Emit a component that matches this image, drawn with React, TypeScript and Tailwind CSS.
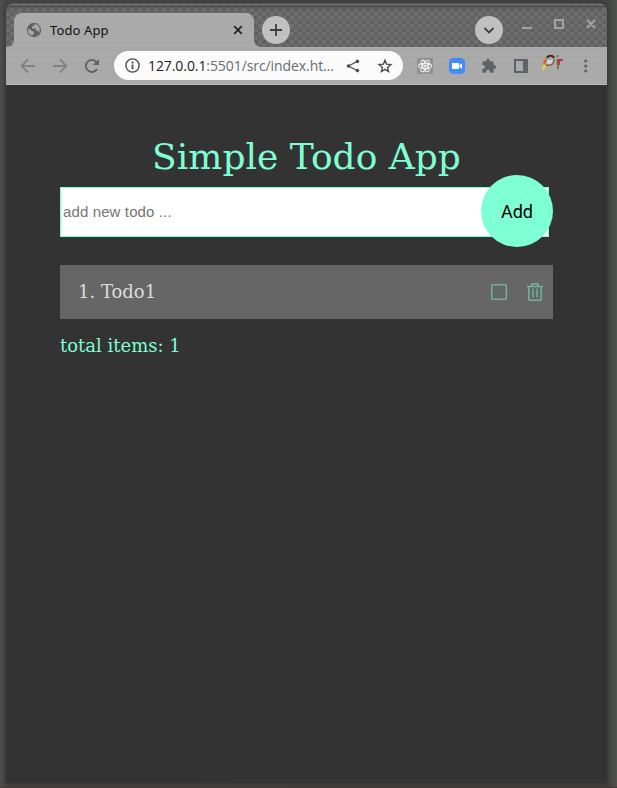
import React from "react";

const weave =
  "bg-[conic-gradient(#626262_25%,#6f6f6f_0_50%,#616161_0_75%,#6c6c6c_0)] bg-[length:8px_8px]";
const brushed =
  "bg-[repeating-linear-gradient(180deg,#a9a9a9_0px,#adadad_1px,#a6a6a6_2px,#ababab_3px,#a7a7a7_5px,#afafaf_6px,#a8a8a8_7px,#adadad_9px,#a6a6a6_10px,#ababab_12px,#a9a9a9_13px)]";

function TabStrip() {
  return (
    <div className={`flex h-11 shrink-0 items-start border-t border-[#555] ${weave}`}>
      <div className="-mt-px flex h-11 w-full items-end bg-[linear-gradient(180deg,#66666688_0px,#66666688_3px,#464646_3px,#464646_4px,#55555588_4px,#55555500_8px)]">
        <svg width="8" height="8" viewBox="0 0 8 8" className="shrink-0">
          <path d="M8 0C8 5 5 8 0 8H8Z" fill="#a8a8a8" />
        </svg>
        <div className={`flex h-[34px] w-[240px] shrink-0 items-center rounded-t-lg pl-3 pr-2.5 ${brushed}`}>
          <svg width="16" height="16" viewBox="0 0 16 16" className="shrink-0">
            <circle cx="8" cy="8" r="7.2" fill="#5f6368" />
            <path d="M2 6.6 6 8.7 7.8 10v1.8l-2 1.8C3.2 12.7 1.5 10.4 2 6.6ZM8.8 2C8.4 3.8 8 4.5 6 4.3v2.2h3.8v2.1h2l.6 2.2C15.5 7.1 13.2 2.6 8.8 2Z" fill="#a8a8a8" />
          </svg>
          <span className="ml-2 mt-px flex-1 whitespace-nowrap font-['Noto_Sans',sans-serif] text-[13px] tracking-[0.12px] text-[#111]">Todo App</span>
          <svg width="12" height="12" viewBox="0 0 12 12" className="shrink-0">
            <path d="M2.2 2.2 9.8 9.8M9.8 2.2 2.2 9.8" stroke="#202124" strokeWidth="1.7" />
          </svg>
        </div>
        <svg width="8" height="8" viewBox="0 0 8 8" className="shrink-0">
          <path d="M0 0C0 5 3 8 8 8H0Z" fill="#a8a8a8" />
        </svg>
        <div className="mb-[3px] flex size-7 shrink-0 items-center justify-center rounded-full bg-[#c0c0c0]">
          <svg width="14" height="14" viewBox="0 0 14 14"><path d="M7 1v12M1 7h12" stroke="#3c4043" strokeWidth="1.8" /></svg>
        </div>
        <div className="mb-[3px] ml-[185px] flex size-7 shrink-0 items-center justify-center rounded-full bg-[#c0c0c0]">
          <svg width="12" height="12" viewBox="0 0 12 12"><path d="m1.5 4 4.5 4.5L10.5 4" fill="none" stroke="#3c4043" strokeWidth="1.8" /></svg>
        </div>
        <svg width="80" height="14" viewBox="0 0 80 14" className="mb-4 ml-[17px] shrink-0" fill="none" stroke="#a2a2a2" strokeWidth="2">
          <path d="M2 11h10M35 3h8v8h-8zM67 3l8 8M75 3l-8 8" />
        </svg>
      </div>
    </div>
  );
}

function Toolbar() {
  return (
    <div className={`flex h-[38px] shrink-0 items-center border-b border-[#bcbcbc] pl-3 ${brushed}`}>
      <svg width="84" height="20" viewBox="0 0 84 20" className="shrink-0" fill="none" strokeWidth="1.9">
        <path d="M17 10H4M10 3.5 3.5 10l6.5 6.5M35 10h13M42 3.5l6.5 6.5-6.5 6.5" stroke="#818386" />
        <path d="M79 13a6 6 0 1 1-.7-7.1L80 7.6" stroke="#5f6368" />
        <path d="M81 3v6h-6z" fill="#5f6368" />
      </svg>
      <div className="ml-3 flex h-[29px] w-[289px] shrink-0 items-center rounded-full bg-[#fbfbfb] pl-[11px] pr-2.5">
        <svg width="15" height="15" viewBox="0 0 15 15" className="shrink-0">
          <circle cx="7.5" cy="7.5" r="6.6" fill="none" stroke="#4b4e52" strokeWidth="1.4" />
          <path d="M7.5 6.6v4.6M7.5 3.6v1.8" stroke="#4b4e52" strokeWidth="1.8" />
        </svg>
        <span className="ml-2 w-[198px] whitespace-nowrap font-['Open_Sans',sans-serif] text-[14px] tracking-[-0.08px] text-[#676b70]">
          <span className="text-[#202124]">127.0.0.1</span>:5501/src/index.ht…
        </span>
        <svg width="14" height="14" viewBox="0 0 14 14" className="shrink-0" fill="#4b4e52">
          <path d="M11 2.5 2.5 7l8.5 4.5" fill="none" stroke="#4b4e52" strokeWidth="1.3" />
          <circle cx="2.5" cy="7" r="1.8" /><circle cx="11.4" cy="2.4" r="1.8" /><circle cx="11.4" cy="11.6" r="1.8" />
        </svg>
        <svg width="16" height="16" viewBox="0 0 16 16" className="ml-[17px] shrink-0" fill="none" stroke="#4b4e52" strokeWidth="1.4">
          <path d="m8 2.2 1.6 4 4.3.4-3.3 2.8 1 4.2L8 11.4l-3.6 2.2 1-4.2-3.3-2.8 4.3-.4Z" />
        </svg>
      </div>
      <div className="ml-3.5 flex size-4 shrink-0 items-center justify-center bg-[#929292]">
        <svg width="16" height="16" viewBox="0 0 16 16" fill="none" stroke="#eee" strokeWidth="1.1">
          <ellipse cx="8" cy="8" rx="6.5" ry="2.6" />
          <ellipse cx="8" cy="8" rx="6.5" ry="2.6" transform="rotate(60 8 8)" />
          <ellipse cx="8" cy="8" rx="6.5" ry="2.6" transform="rotate(120 8 8)" />
          <circle cx="8" cy="8" r="1" fill="#eee" />
        </svg>
      </div>
      <svg width="16" height="16" viewBox="0 0 16 16" className="ml-4 shrink-0">
        <rect width="16" height="16" rx="4.5" fill="#438bfa" />
        <path d="M3 5h6a1 1 0 0 1 1 1v5H4a1 1 0 0 1-1-1ZM10.5 7 13 5.2v5.6L10.5 9Z" fill="#fff" />
      </svg>
      <svg width="16" height="16" viewBox="0 0 24 24" className="ml-4 shrink-0">
        <path d="M20.5 11H19V7a2 2 0 0 0-2-2h-4V3.5a2.5 2.5 0 0 0-5 0V5H4a2 2 0 0 0-2 2v3.8h1.5a2.7 2.7 0 0 1 0 5.4H2V20a2 2 0 0 0 2 2h3.8v-1.5a2.7 2.7 0 0 1 5.4 0V22H17a2 2 0 0 0 2-2v-4h1.5a2.5 2.5 0 0 0 0-5Z" fill="#5f6368" />
      </svg>
      <svg width="14" height="14" viewBox="0 0 14 14" className="ml-[17px] shrink-0">
        <path d="M1 1h12v12H1z" fill="none" stroke="#5f6368" strokeWidth="2" />
        <path d="M9 1h5v12H9z" fill="#5f6368" />
      </svg>
      <svg width="22" height="18" viewBox="0 0 22 18" className="mb-[5px] ml-3.5 shrink-0" fill="none">
        <path d="M5 4c1-3 6-3 7 0" stroke="#4c2a17" strokeWidth="2.2" />
        <path d="m4 5-2 5" stroke="#df651e" strokeWidth="2.4" />
        <path d="M1.5 11v5M3 11v3" stroke="#ddd345" strokeWidth="2" />
        <path d="M5 6h6v4H5z" fill="#c7d7df" />
        <path d="M4 11c4 1 8 0 8-6" stroke="#855b35" strokeWidth="1.3" />
        <path d="M14 2h3" stroke="#777" strokeWidth="1.4" />
        <path d="M15 6c1 2 1 3 1 9" stroke="#6f7944" strokeWidth="2" />
        <path d="M15 6h6M17 6v5" stroke="#b83646" strokeWidth="2" />
      </svg>
      <svg width="4" height="14" viewBox="0 0 4 14" className="ml-5 shrink-0" fill="#5f6368">
        <circle cx="1.7" cy="2" r="1.6" /><circle cx="1.7" cy="7" r="1.6" /><circle cx="1.7" cy="12" r="1.6" />
      </svg>
    </div>
  );
}

export default function App() {
  return (
    <div className="h-[788px] w-[617px] border-b border-[#46383c] bg-[linear-gradient(90deg,#4e504a_0px,#454641_6px,#41423e_607px,#50534d_617px)] pl-1.5 pt-[3px]">
      <div className="flex h-[780px] w-[601px] flex-col overflow-hidden rounded-t-lg bg-[#333] shadow-[0_1px_4px_#333]">
        <TabStrip />
        <Toolbar />
        <main className="flex flex-col px-[54px] font-['DejaVu_Serif',serif]">
          <h1 className="mt-[51px] h-[42px] whitespace-nowrap text-center text-[36px] leading-[42px] text-[#7fffd4]">Simple Todo App</h1>
          <div className="mt-[-3px] flex h-[72px] items-center">
            <input
              placeholder="add new todo ..."
              className="mt-0.5 h-[50px] w-[489px] shrink-0 border border-[#7fffd4] bg-white px-0.5 pb-px font-['Liberation_Sans',sans-serif] text-[15px] tracking-[0.12px] outline-none placeholder:text-[#757575]"
            />
            <button className="z-10 -ml-[68px] flex size-[72px] shrink-0 items-center justify-center rounded-full bg-[#7fffd4] font-['Roboto',sans-serif] text-[18px] text-black">Add</button>
          </div>
          <div className="mt-[18px] flex h-[54px] items-center bg-[#666] pl-[18px] pr-[9px] text-[18px] text-[#dcdcdc]">
            <span className="mb-0.5 flex-1">1. Todo1</span>
            <svg width="18" height="18" viewBox="0 0 18 18" fill="none" stroke="#70b29d" strokeWidth="1.5">
              <rect x="1.7" y="1.7" width="14.6" height="14.6" rx="1" />
            </svg>
            <svg width="18" height="20" viewBox="0 0 18 20" className="ml-[18px]" fill="none" stroke="#70b29d" strokeWidth="1.5">
              <path d="M1 4.6h16M2.8 5v12.2c0 .7.4 1 1 1h10.4c.6 0 1-.3 1-1V5M5.5 4.3c0-1.5.7-2.5 2-2.5h3c1.3 0 2 1 2 2.5M7 6.8v8.8M11 6.8v8.8" />
            </svg>
          </div>
          <p className="mt-[15px] text-[18px] leading-6 text-[#7fffd4]">total items: 1</p>
        </main>
      </div>
    </div>
  );
}
